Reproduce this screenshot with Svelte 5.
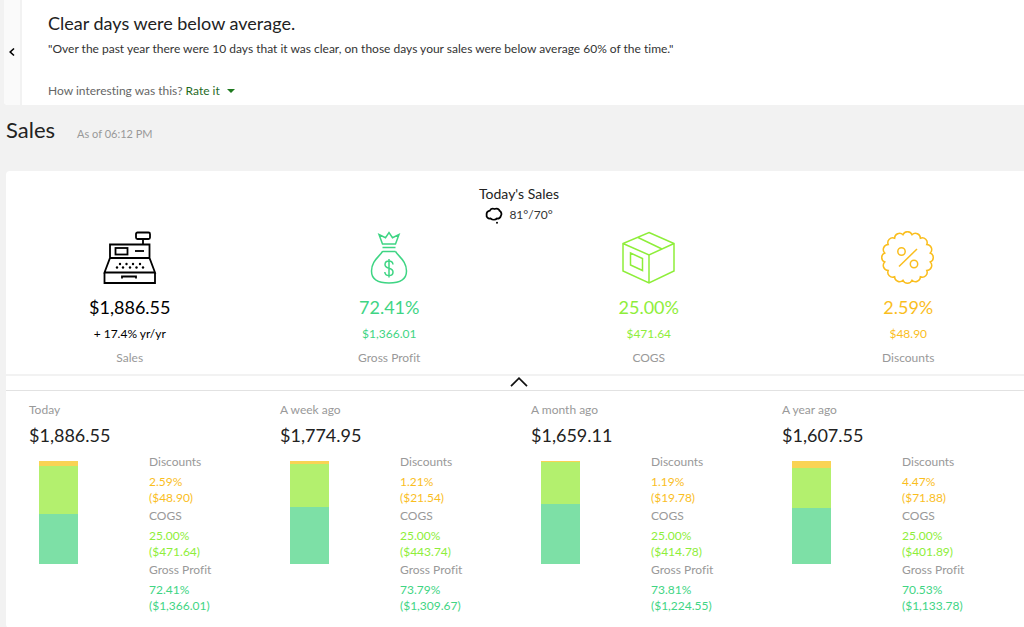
<script lang="ts">
  type Kind = 'sales' | 'profit' | 'cogs' | 'discounts';

  const summary: { kind: Kind; label: string; value: string; sub: string }[] = [
    { kind: 'sales', label: 'Sales', value: '$1,886.55', sub: '+ 17.4% yr/yr' },
    { kind: 'profit', label: 'Gross Profit', value: '72.41%', sub: '$1,366.01' },
    { kind: 'cogs', label: 'COGS', value: '25.00%', sub: '$471.64' },
    { kind: 'discounts', label: 'Discounts', value: '2.59%', sub: '$48.90' },
  ];

  // bar: share of the stack in percent, top to bottom
  const periods = [
    { name: 'Today', total: '$1,886.55', bar: [5, 46, 49], discounts: ['2.59%', '$48.90'], cogs: ['25.00%', '$471.64'], profit: ['72.41%', '$1,366.01'] },
    { name: 'A week ago', total: '$1,774.95', bar: [3, 42, 55], discounts: ['1.21%', '$21.54'], cogs: ['25.00%', '$443.74'], profit: ['73.79%', '$1,309.67'] },
    { name: 'A month ago', total: '$1,659.11', bar: [1, 41, 58], discounts: ['1.19%', '$19.78'], cogs: ['25.00%', '$414.78'], profit: ['73.81%', '$1,224.55'] },
    { name: 'A year ago', total: '$1,607.55', bar: [7, 39, 54], discounts: ['4.47%', '$71.88'], cogs: ['25.00%', '$401.89'], profit: ['70.53%', '$1,133.78'] },
  ];

  let open = $state(true);

  // scalloped edge of the discount badge
  function scallop(cx: number, cy: number, r: number, n: number) {
    const pt = (i: number) => {
      const a = ((i + 0.5) / n) * Math.PI * 2 - Math.PI / 2;
      return `${(cx + r * Math.cos(a)).toFixed(2)} ${(cy + r * Math.sin(a)).toFixed(2)}`;
    };
    let d = `M${pt(0)}`;
    for (let i = 1; i <= n; i++) d += `A4.9 4.9 0 0 1 ${pt(i)}`;
    return d + 'Z';
  }
</script>

<div class="page">
  <section class="insight">
    <button class="prev" aria-label="Previous insight">
      <svg width="8" height="10" viewBox="0 0 8 10"><path d="M6 1.5 2.2 5 6 8.5" /></svg>
    </button>
    <div class="story">
      <h2>Clear days were below average.</h2>
      <p>"Over the past year there were 10 days that it was clear, on those days your sales were below average 60% of the time."</p>
      <div class="rate">
        How interesting was this?
        <button>Rate it <i></i></button>
      </div>
    </div>
  </section>

  <header>
    <h1>Sales</h1>
    <span>As of 06:12 PM</span>
  </header>

  <section class="card">
    <div class="today">
      <h3>Today's Sales</h3>
      <div class="weather">
        <svg width="18" height="18" viewBox="0 0 18 18">
          <path d="M5.500 12.500C3 13 1.200 11 1.600 8.800 1.400 6.500 3 5 4.800 4.600 6 2.600 8 2.500 9.500 3 12 2 14 3 14.600 4.800 16.500 6 17 8.500 15.800 10 15.500 12 13.500 12.800 12 12.500 10.500 14 7.500 14 5.500 12.500Z" />
          <circle cx="12" cy="16.800" r="1" />
        </svg>
        <span>81°/70°</span>
      </div>
    </div>

    <div class="summary">
      {#each summary as item}
        <div class="metric {item.kind}">
          <svg width="54" height="54" viewBox="0 0 54 54">
            {#if item.kind === 'sales'}
              <rect x="33" y="1.500" width="14" height="6.500" rx="1.500" />
              <path d="M40 8v5M7 27V13.500h39.500V27M7 27h39.500l5.500 14.500H1.500zM1.500 41.500V52H52V41.500M19 47.500V45.500h14v2" />
              <rect x="12.500" y="17" width="12" height="6.500" />
              <path d="M32 20h9" />
              <g class="keys">
                {#each [17, 23.5, 30, 37] as x}<circle cx={x} cy="33" r="1.200" />{/each}
                {#each [14, 20, 27, 33.5, 40] as x}<circle cx={x} cy="36.500" r="1.200" />{/each}
              </g>
            {:else if item.kind === 'profit'}
              <path d="M20.500 13 17 3.500l6.500 3.200L27 1.500l3.500 5.200L37 3.500 33.500 13zM20.500 16.500h13M20.500 20.500h13M20.500 20.500C17 26 9.500 30 9.500 40c0 8.500 6.500 12 17.500 12s17.500-3.500 17.500-12c0-10-7.500-14-11-19.500" />
              <path d="M31 33.500c-.300-2.300-1.800-3.500-4-3.500-2.500 0-4 1.400-4 3.500 0 5 8 2.500 8 7.500 0 2.200-1.600 3.600-4 3.600s-4-1.300-4.200-3.600M27 28v18.500" />
            {:else if item.kind === 'cogs'}
              <path d="M27 1.500 52 12.500V40L27 52 1 40V12.500zM1 12.500 27 24 52 12.500M27 24v28M16 6.500 40 18" />
              <path d="M8.500 22 20.500 27.500V39.500L8.500 34z" />
            {:else}
              <path d={scallop(26.5, 26.5, 23.2, 16)} />
              <circle cx="20.500" cy="20.500" r="3.700" />
              <circle cx="33" cy="33" r="3.700" />
              <path d="M18 35.500 36 18" />
            {/if}
          </svg>
          <strong>{item.value}</strong>
          <span>{item.sub}</span>
          <em>{item.label}</em>
        </div>
      {/each}
    </div>

    <button class="toggle" aria-label="Toggle comparison" aria-expanded={open} onclick={() => (open = !open)}>
      <svg class:closed={!open} width="20" height="10" viewBox="0 0 20 10"><path d="M2 9.200 10 1.200l8 8" /></svg>
    </button>

    {#if open}
      <div class="periods">
        {#each periods as p}
          <article>
            <h4>{p.name}</h4>
            <strong>{p.total}</strong>
            <div class="breakdown">
              <div class="bar">
                <i class="discounts" style:height={`${p.bar[0]}%`}></i>
                <i class="cogs" style:height={`${p.bar[1]}%`}></i>
                <i class="profit" style:height={`${p.bar[2]}%`}></i>
              </div>
              <dl>
                <dt>Discounts</dt>
                <dd class="discounts">{p.discounts[0]}<br />({p.discounts[1]})</dd>
                <dt>COGS</dt>
                <dd class="cogs">{p.cogs[0]}<br />({p.cogs[1]})</dd>
                <dt>Gross Profit</dt>
                <dd class="profit">{p.profit[0]}<br />({p.profit[1]})</dd>
              </dl>
            </div>
          </article>
        {/each}
      </div>
    {/if}
  </section>
</div>

<style>
  :global(body) {
    background: #f2f2f2;
    overflow: hidden;
  }
  .page {
    font: 12px/16px Lato, 'Open Sans', sans-serif;
    font-variant-ligatures: none;
    color: #222;
  }
  h1, h2, h3, h4, p, dl, dd { margin: 0; font-weight: 400; }
  button { border: 0; padding: 0; background: none; font: inherit; color: inherit; cursor: pointer; }
  svg { display: block; fill: none; stroke: currentColor; }

  .insight {
    display: flex;
    margin-left: 4px;
    background: #fff;
    border-radius: 0 0 0 4px;
    overflow: hidden;
  }
  .prev {
    display: flex;
    align-items: center;
    justify-content: center;
    width: 18px;
    padding-bottom: 2px;
    border-right: 2px solid #f2f2f2;
    background: #fafafa;
    color: #000;
  }
  .prev svg { stroke-width: 1.6; }
  .story { flex: 1; padding: 11px 26px 6px; }
  h2 { font-size: 18px; line-height: 24px; }
  .story p { margin-top: 6px; color: #333; }
  .rate { margin-top: 26px; color: #666; }
  .rate button { color: #1f6b1f; }
  .rate i {
    display: inline-block;
    margin-left: 4px;
    vertical-align: 2px;
    border: 4px solid transparent;
    border-top-color: #1f7a1f;
    border-bottom: 0;
  }

  header {
    display: flex;
    align-items: baseline;
    gap: 22px;
    padding: 11px 6px 27px;
  }
  h1 { font-size: 22px; line-height: 28px; }
  header span { color: #999; font-size: 11px; }

  /* the card runs past the right edge of the window */
  .card {
    margin: 0 -8px 0 6px;
    padding-top: 15px;
    background: #fff;
    border-radius: 4px;
  }
  .today { text-align: center; }
  h3 { font-size: 14px; line-height: 16px; }
  .weather {
    display: flex;
    align-items: center;
    justify-content: center;
    gap: 6px;
    height: 25px;
    color: #333;
  }
  .weather svg { color: #000; stroke-width: 1.8; }
  .weather circle { fill: currentColor; stroke: none; }

  .summary {
    display: grid;
    grid-template-columns: repeat(4, 1fr);
    margin: 0 -6px;
    padding: 4px 0 8px;
  }
  .metric {
    display: flex;
    flex-direction: column;
    align-items: center;
  }
  .metric svg { margin-bottom: 10px; stroke-width: 1.5; }
  .metric strong { font-size: 18px; line-height: 24px; font-weight: 400; }
  .metric span { margin: 7px 0 8px; }
  .metric em { font-style: normal; color: #999; }
  .metric.sales { color: #000; }
  .sales svg { stroke-width: 1.8; }
  .keys { fill: currentColor; stroke: none; }
  .profit { color: #3fd584; }
  .cogs { color: #8eee3a; }
  .discounts { color: #fabe1e; }

  .toggle {
    display: flex;
    align-items: center;
    justify-content: center;
    width: 100%;
    height: 17px;
    padding-bottom: 2px;
    border-top: 2px solid #f2f2f2;
    border-bottom: 1px solid #e2e2e2;
    color: #111;
  }
  .toggle svg { stroke-width: 1.7; }
  .closed { transform: rotate(180deg); }

  .periods {
    display: grid;
    grid-template-columns: repeat(4, 1fr);
    margin-right: -1px;
    padding: 11px 0 12px 23px;
  }
  h4 { font-size: 12px; color: #999; }
  article strong { display: block; margin-top: 5px; font-size: 18px; line-height: 24px; font-weight: 400; }
  .breakdown {
    display: grid;
    grid-template-columns: 120px 1fr;
    margin-top: 7px;
  }
  .bar {
    width: 39px;
    height: 103px;
    margin: 7px 0 0 10px;
  }
  .bar i { display: block; }
  .bar .discounts { background: #f9d354; }
  .bar .cogs { background: #b3f06e; }
  .bar .profit { background: #7de0a6; }
  dt { margin-bottom: 4px; color: #999; }
  dd { margin-bottom: 2px; }
</style>
